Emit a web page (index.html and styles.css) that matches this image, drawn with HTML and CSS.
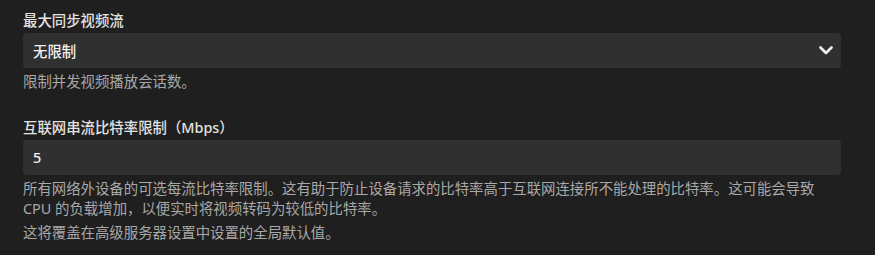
FILE: index.html
```html
<!DOCTYPE html>
<html lang="zh-CN">
<head>
<meta charset="utf-8">
<link rel="stylesheet" href="styles.css">
</head>
<body>
<div class="page">
  <div class="field">
    <label class="field-label">最大同步视频流</label>
    <div class="select">
      <span class="select-value">无限制</span>
      <svg class="chevron" width="14" height="9" viewBox="0 0 14 9"><path d="M1.5 1.5 L7 7 L12.5 1.5" fill="none" stroke="#f0f0f0" stroke-width="2.6" stroke-linecap="round" stroke-linejoin="round"/></svg>
    </div>
    <div class="field-desc">限制并发视频播放会话数。</div>
  </div>
  <div class="field field-second">
    <label class="field-label">互联网串流比特率限制（Mbps）</label>
    <div class="input"><span class="input-value">5</span></div>
    <div class="field-desc">所有网络外设备的可选每流比特率限制。这有助于防止设备请求的比特率高于互联网连接所不能处理的比特率。这可能会导致 CPU 的负载增加，以便实时将视频转码为较低的比特率。</div>
    <div class="field-desc field-desc-extra">这将覆盖在高级服务器设置中设置的全局默认值。</div>
  </div>
</div>
</body>
</html>
```

FILE: styles.css
```css
html, body {
  margin: 0;
  padding: 0;
  background: #1f1f1f;
}
body {
  font-family: "Noto Sans", "Noto Sans CJK SC", sans-serif;
  font-size: 14.4px;
  color: #e6e6e6;
}
.page {
  padding: 11px 34px 0 23px;
}
.field-label {
  display: block;
  line-height: 20px;
  margin-bottom: 2px;
  color: #e2e2e2;
  font-weight: 500;
}
.select, .input {
  height: 35px;
  background: #303030;
  border-radius: 4px;
  display: flex;
  align-items: center;
  padding: 0 8px 0 10px;
  box-sizing: border-box;
}
.select-value, .input-value {
  flex: 1;
  color: #f2f2f2;
  font-weight: 500;
}
.chevron {
  display: block;
}
.field-desc {
  line-height: 20px;
  color: #a8a8a8;
  margin-top: 4px;
}
.field-second {
  margin-top: 26px;
}
.field-desc-extra {
  margin-top: 4px;
}
```
